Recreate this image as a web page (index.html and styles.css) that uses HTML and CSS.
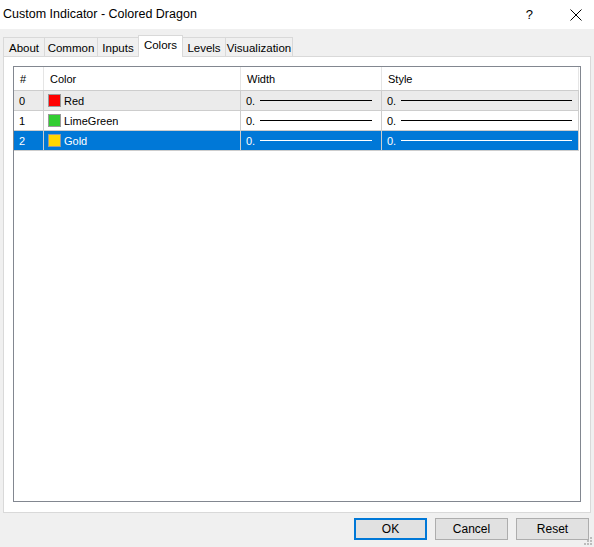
FILE: index.html
```html
<!DOCTYPE html>
<html>
<head>
<meta charset="utf-8">
<link rel="stylesheet" href="styles.css">
</head>
<body>
<div class="window">
  <div class="titlebar">
    <span class="title">Custom Indicator - Colored Dragon</span>
    <span class="help">?</span>
    <svg class="close" width="12" height="12" viewBox="0 0 12 12"><path d="M0.5 0.5 L11.5 11.5 M11.5 0.5 L0.5 11.5" stroke="#000" stroke-width="1" fill="none"/></svg>
  </div>
  <div class="body">
    <div class="tabs">
      <div class="tab t-about">About</div>
      <div class="tab t-common">Common</div>
      <div class="tab t-inputs">Inputs</div>
      <div class="tab t-colors active">Colors</div>
      <div class="tab t-levels">Levels</div>
      <div class="tab t-vis">Visualization</div>
    </div>
    <div class="panel">
      <div class="list">
        <div class="row header">
          <div class="cell c0">#</div>
          <div class="cell c1">Color</div>
          <div class="cell c2">Width</div>
          <div class="cell c3">Style</div>
        </div>
        <div class="row alt">
          <div class="cell c0">0</div>
          <div class="cell c1"><span class="sw red"></span>Red</div>
          <div class="cell c2">0.<span class="line w"></span></div>
          <div class="cell c3">0.<span class="line s"></span></div>
        </div>
        <div class="row">
          <div class="cell c0">1</div>
          <div class="cell c1"><span class="sw green"></span>LimeGreen</div>
          <div class="cell c2">0.<span class="line w"></span></div>
          <div class="cell c3">0.<span class="line s"></span></div>
        </div>
        <div class="row sel">
          <div class="cell c0">2</div>
          <div class="cell c1"><span class="sw gold"></span>Gold</div>
          <div class="cell c2">0.<span class="line w"></span></div>
          <div class="cell c3">0.<span class="line s"></span></div>
        </div>
      </div>
    </div>
    <div class="footer">
      <div class="btn default">OK</div>
      <div class="btn">Cancel</div>
      <div class="btn">Reset</div>
    </div>
  </div>
  <svg class="grip" width="10" height="10" viewBox="0 0 10 10">
    <rect x="7" y="1" width="2" height="2" fill="#bcbcbc"/>
    <rect x="4" y="4" width="2" height="2" fill="#bcbcbc"/>
    <rect x="7" y="4" width="2" height="2" fill="#bcbcbc"/>
    <rect x="1" y="7" width="2" height="2" fill="#bcbcbc"/>
    <rect x="4" y="7" width="2" height="2" fill="#bcbcbc"/>
    <rect x="7" y="7" width="2" height="2" fill="#bcbcbc"/>
  </svg>
</div>
</body>
</html>
```
FILE: styles.css
```css
html, body {
  margin: 0;
  padding: 0;
}
body {
  width: 594px;
  height: 547px;
  overflow: hidden;
  background: #f0f0f0;
  font-family: "Liberation Sans", Arial, sans-serif;
  color: #000;
}
.window {
  position: relative;
  width: 594px;
  height: 547px;
}
.titlebar {
  height: 29px;
  background: #fff;
  display: flex;
  align-items: center;
  font-size: 12px;
}
.title {
  margin-left: 3px;
  font-size: 12.5px;
  flex: 1;
  padding-bottom: 1px;
}
.help {
  font-size: 13px;
  margin-right: 37px;
}
.close {
  margin-right: 12px;
}
.body {
  padding: 0 3px;
}
.tabs {
  display: flex;
  height: 27px;
  align-items: flex-end;
  font-size: 11.5px;
}
.tab {
  box-sizing: border-box;
  height: 19px;
  border: 1px solid #d9d9d9;
  border-bottom: none;
  border-right: none;
  background: #f0f0f0;
  display: flex;
  align-items: center;
  justify-content: center;
  padding-top: 1px;
  white-space: nowrap;
}
.t-about { width: 41px; }
.t-common { width: 53px; }
.t-inputs { width: 41px; }
.t-colors { width: 45px; }
.t-levels { width: 42px; }
.t-vis { width: 68px; border-right: 1px solid #d9d9d9; }
.tab.active {
  height: 22px;
  background: #fff;
  border-right: 1px solid #d9d9d9;
  margin-bottom: -1px;
  position: relative;
  z-index: 1;
  padding-top: 0;
  padding-bottom: 3px;
}
.tab.active + .tab { border-left: none; }
.panel {
  box-sizing: border-box;
  height: 457px;
  background: #fff;
  border: 1px solid #d9d9d9;
  padding: 9px 9px 10px 9px;
}
.list {
  box-sizing: border-box;
  height: 100%;
  border: 1px solid #828790;
  background: #fff;
  font-size: 11px;
}
.row {
  display: flex;
  height: 20px;
  box-sizing: border-box;
  border-bottom: 1px solid #cdcdcd;
  width: 565px;
}
.row.header {
  height: 24px;
  border-bottom: 1px solid #cdcdcd;
}
.cell {
  box-sizing: border-box;
  display: flex;
  align-items: center;
  border-right: 1px solid #cdcdcd;
  padding-left: 5px;
  white-space: nowrap;
}
.header .cell {
  border-right: 1px solid #e5e5e5;
  padding-left: 6px;
}
.c0 { width: 30px; }
.c1 { width: 197px; padding-left: 4px; }
.c2 { width: 141px; }
.c3 { width: 197px; }
.header .c1 { padding-left: 6px; }
.row.alt { background: #ebebeb; }
.row.sel { background: #0078d7; color: #fff; }
.sw {
  box-sizing: border-box;
  width: 13px;
  height: 13px;
  border: 1px solid #9a9a9a;
  margin-right: 3px;
  display: inline-block;
}
.red { background: #ff0000; }
.green { background: #32cd32; }
.gold { background: #ffd700; }
.line {
  display: inline-block;
  height: 1px;
  background: #000;
  margin-left: 5px;
}
.sel .line { background: #fff; }
.line.w { width: 112px; }
.line.s { width: 171px; }
.footer {
  display: flex;
  justify-content: flex-end;
  gap: 8px;
  padding-top: 5px;
  padding-right: 2px;
}
.btn {
  box-sizing: border-box;
  width: 73px;
  height: 22px;
  border: 1px solid #adadad;
  background: #e1e1e1;
  display: flex;
  align-items: center;
  justify-content: center;
  font-size: 12px;
}
.btn.default {
  border: 2px solid #0078d7;
}
.grip {
  position: absolute;
  right: 1px;
  bottom: 1px;
}
```
